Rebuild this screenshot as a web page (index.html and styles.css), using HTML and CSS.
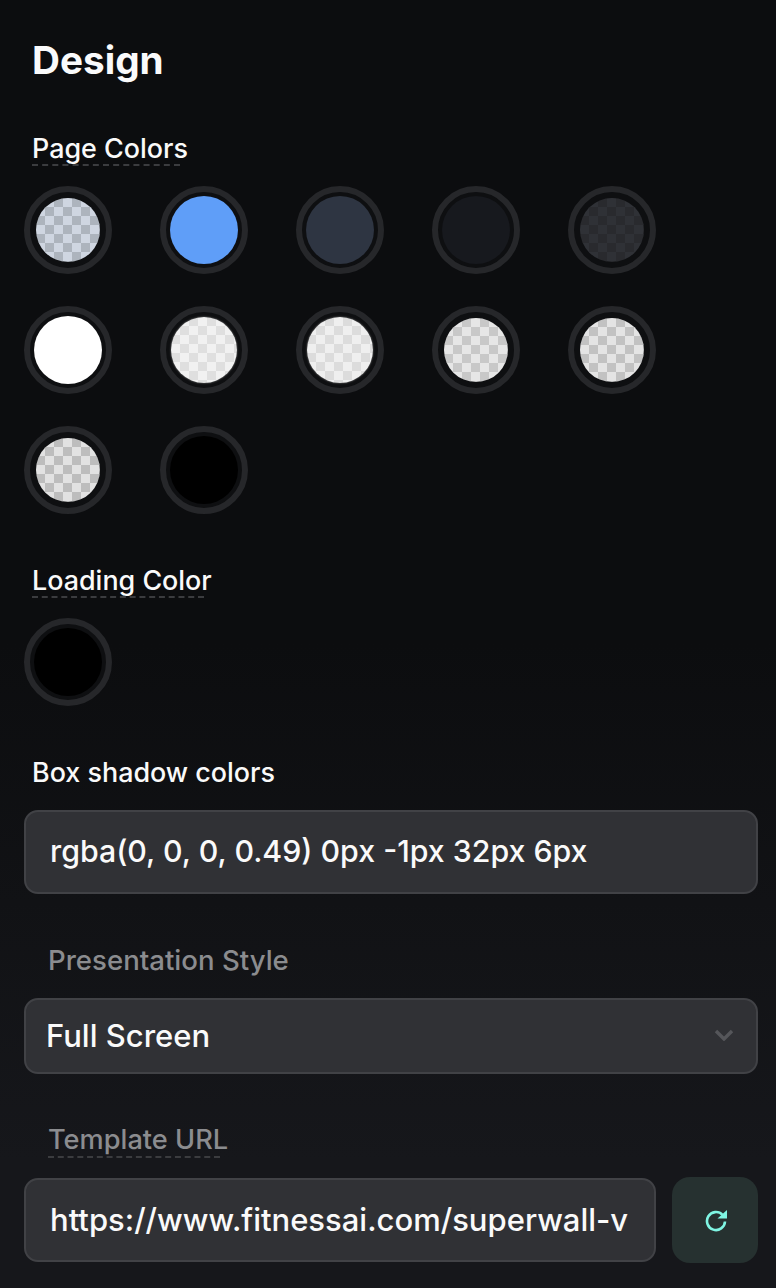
FILE: index.html
```html
<!DOCTYPE html>
<html lang="en">
<head>
<meta charset="utf-8">
<title>Design</title>
<link rel="stylesheet" href="styles.css">
</head>
<body>
<main class="panel">
  <h1 class="title">Design</h1>

  <section class="color-group">
    <div class="label-row"><span class="label tip tip-page">Page Colors</span></div>
    <div class="swatches">
      <div class="ring"><div class="fill check c-slate"></div></div>
      <div class="ring"><div class="fill s-blue"></div></div>
      <div class="ring"><div class="fill s-navy"></div></div>
      <div class="ring"><div class="fill s-ink"></div></div>
      <div class="ring"><div class="fill check c-dark"></div></div>
      <div class="ring"><div class="fill s-white"></div></div>
      <div class="ring"><div class="fill check c-w1"></div></div>
      <div class="ring"><div class="fill check c-w1 fuzzy"></div></div>
      <div class="ring"><div class="fill check c-w2"></div></div>
      <div class="ring"><div class="fill check c-w3"></div></div>
      <div class="ring"><div class="fill check c-w4"></div></div>
      <div class="ring"><div class="fill s-black"></div></div>
    </div>
  </section>

  <section class="color-group loading">
    <div class="label-row"><span class="label tip tip-loading">Loading Color</span></div>
    <div class="swatches">
      <div class="ring"><div class="fill s-black"></div></div>
    </div>
  </section>

  <section class="shadow-group">
    <div class="label-row"><span class="label">Box shadow colors</span></div>
    <div class="field tall shadow-value">rgba(0, 0, 0, 0.49) 0px -1px 32px 6px</div>
  </section>

  <section class="style-group">
    <div class="label-row inset"><span class="label muted wide">Presentation Style</span></div>
    <div class="field select">
      <span>Full Screen</span>
      <svg class="chevron" width="20" height="12" viewBox="0 0 20 12" aria-hidden="true"><path d="M2 2l8 8 8-8" fill="none" stroke="#55565a" stroke-width="3.4"/></svg>
    </div>
  </section>

  <section class="url-group">
    <div class="label-row inset"><span class="label muted tip tip-url">Template URL</span></div>
    <div class="url-row">
      <div class="field tall grow url-value">https://www.fitnessai.com/superwall-v</div>
      <button class="refresh" type="button" aria-label="Refresh">
        <svg width="24" height="24" viewBox="0 0 24 24" aria-hidden="true"><path d="M22 13.5A9 9 0 1 1 19.5 6.8" fill="none" stroke="#7ff5e3" stroke-width="2.6"/><path d="M24 2v8.6h-9.5z" fill="#7ff5e3"/></svg>
      </button>
    </div>
  </section>
</main>
</body>
</html>
```
FILE: styles.css
```css
* { box-sizing: border-box; }

html, body { margin: 0; padding: 0; }

body {
  width: 776px;
  height: 1288px;
  overflow: hidden;
  background: linear-gradient(180deg, #0c0d0f 0%, #0c0d0f 50%, #16171b 90%, #16171b 100%);
  color: #fff;
  font-family: Inter, "Liberation Sans", sans-serif;
}

.panel {
  padding: 38px 18px 0 24px;
}

.title {
  margin: 0 0 0 8px;
  font-size: 38.7px;
  line-height: 44px;
  font-weight: 700;
  color: #fafafb;
}

.label-row { height: 32px; padding-left: 8px; display: flex; align-items: flex-start; }
.label-row.inset { padding-left: 24px; }

.label {
  display: inline-block;
  font-size: 26.9px;
  line-height: 32px;
  font-weight: 500;
  white-space: nowrap;
  color: #fafafa;
}

.label.muted { color: #8b8c8f; font-size: 27.2px; }
.label.wide { font-size: 27.6px; }

.tip { height: 34px; border-bottom: 2px dashed #3b3c3f; }
.tip-page { width: 148px; }
.tip-loading { width: 172px; }
.tip-url { width: 172px; }

.color-group { margin-top: 50px; }
.color-group .swatches { margin-top: 22px; }
.color-group.loading { margin-top: 50px; }

.swatches {
  display: grid;
  grid-template-columns: repeat(5, 88px);
  column-gap: 48px;
  row-gap: 32px;
}

.ring {
  width: 88px;
  height: 88px;
  border: 6px solid #26272a;
  border-radius: 50%;
  background: #0e0f11;
  display: flex;
  align-items: center;
  justify-content: center;
}

.fill { width: 68px; height: 68px; border-radius: 50%; }

.s-blue { background: #5f9ef8; }
.s-navy { background: #2e3542; }
.s-ink { background: #17191e; }
.s-white { background: #fff; }
.s-black { background: #000; }

.check {
  width: 64px;
  height: 64px;
  background: repeating-conic-gradient(var(--a) 0 25%, var(--b) 0 50%) 0 0 / 18px 18px;
}

.c-slate { --a: #cfd6e1; --b: #adb4bd; }
.c-dark { --a: #2f3136; --b: #292a2e; }
.c-w1 { --a: #f1f1f1; --b: #dfdfdf; width: 66px; height: 66px; box-shadow: 0 0 2px #8a8a8a; }
.c-w2 { --a: #e6e6e6; --b: #c8c8c8; }
.c-w3 { --a: #e4e4e4; --b: #c2c2c2; }
.c-w4 { --a: #e2e2e2; --b: #bdbdbd; }
.fuzzy { --a: #efefef; --b: #dcdcdc; }

.shadow-group { margin-top: 50px; }
.shadow-group .field { margin-top: 22px; }

.field {
  border: 2px solid #414246;
  border-radius: 14px;
  background: #303135;
  font-size: 31px;
  font-weight: 500;
  color: #fafafa;
  white-space: nowrap;
  overflow: hidden;
  display: flex;
  align-items: center;
}

.field.tall { height: 84px; padding: 0 24px; }
.field.shadow-value { font-size: 30.3px; padding-bottom: 3px; }
.field.url-value { padding-bottom: 2px; }

.style-group { margin-top: 50px; }
.style-group .field { margin-top: 22px; }

.field.select {
  height: 76px;
  padding: 0 22px 2px 20px;
  justify-content: space-between;
}

.url-group { margin-top: 50px; }

.url-row {
  margin-top: 21px;
  display: flex;
  align-items: center;
  gap: 16px;
}

.grow { flex: 1; min-width: 0; }

.refresh {
  width: 86px;
  height: 86px;
  flex: none;
  border: 0;
  border-radius: 18px;
  background: #263130;
  padding: 0;
  display: flex;
  align-items: center;
  justify-content: center;
}
```
